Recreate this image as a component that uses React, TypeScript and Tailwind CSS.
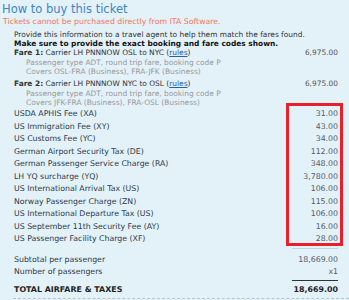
import React from "react";

const fees: [string, string][] = [
  ["USDA APHIS Fee (XA)", "31.00"],
  ["US Immigration Fee (XY)", "43.00"],
  ["US Customs Fee (YC)", "34.00"],
  ["German Airport Security Tax (DE)", "112.00"],
  ["German Passenger Service Charge (RA)", "348.00"],
  ["LH YQ surcharge (YQ)", "3,780.00"],
  ["US International Arrival Tax (US)", "106.00"],
  ["Norway Passenger Charge (ZN)", "115.00"],
  ["US International Departure Tax (US)", "106.00"],
  ["US September 11th Security Fee (AY)", "16.00"],
  ["US Passenger Facility Charge (XF)", "28.00"],
];

function Fare({ n, route, type, covers }: { n: number; route: string; type: string; covers: string }) {
  return (
    <div>
      <div className="flex justify-between h-[9px] leading-[9px] text-[#333]">
        <span>
          <b>Fare {n}:</b> Carrier LH PNNNOW {route} (
          <span className="text-[#2860a8] underline">rules</span>)
        </span>
        <span className="text-[#555]">6,975.00</span>
      </div>
      <div className="pl-3 text-[#999] mt-[0.5px]">
        <div className="h-[9px] leading-[9px] whitespace-nowrap">{type}</div>
        <div className="h-[9px] leading-[9px] whitespace-nowrap">{covers}</div>
      </div>
    </div>
  );
}

export default function App() {
  return (
    <div
      className="relative w-[349px] h-[300px] bg-[#e3f1f9] overflow-hidden"
      style={{ fontFamily: '"DejaVu Sans", Verdana, sans-serif' }}
    >
      <h1 className="pl-[2px] pt-[1px] h-[17px] text-[11.5px] leading-[16px] text-[#3d86c6]">How to buy this ticket</h1>
      <p className="pl-[3px] h-[9px] text-[7.8px] leading-[9px] text-[#f2775a] whitespace-nowrap">
        Tickets cannot be purchased directly from ITA Software.
      </p>

      <div className="pl-[14px] pr-[11px] mt-[3.5px]">
        <div className="text-[7.45px]">
          <div className="h-[9.5px] leading-[9px] text-[#333] whitespace-nowrap">
            Provide this information to a travel agent to help them match the fares found.
          </div>
          <div className="h-[9px] leading-[9px] font-bold text-[#111] whitespace-nowrap">
            Make sure to provide the exact booking and fare codes shown.
          </div>
          <Fare
            n={1}
            route="OSL to NYC"
            type="Passenger type ADT, round trip fare, booking code P"
            covers="Covers OSL-FRA (Business), FRA-JFK (Business)"
          />
          <div className="h-[3.5px]" />
          <Fare
            n={2}
            route="NYC to OSL"
            type="Passenger type ADT, round trip fare, booking code P"
            covers="Covers JFK-FRA (Business), FRA-OSL (Business)"
          />
        </div>

        <div className="mt-[1.75px] text-[7.8px]">
          {fees.map(([label, amount]) => (
            <div key={label} className="flex justify-between h-[12.5px] leading-[12.5px]">
              <span className="text-[#2b3a4a]">{label}</span>
              <span className="text-[#555a66]">{amount}</span>
            </div>
          ))}
          <div className="flex justify-end mt-[2px]">
            <div className="w-[46px] border-t border-[#c8d4dc]" />
          </div>
        </div>

        <div className="mt-[5.5px] text-[7.8px]">
          <div className="flex justify-between h-[12px] leading-[12px]">
            <span className="text-[#2b3a4a]">Subtotal per passenger</span>
            <span className="text-[#555a66]">18,669.00</span>
          </div>
          <div className="flex justify-between h-[12px] leading-[12px]">
            <span className="text-[#2b3a4a]">Number of passengers</span>
            <span className="text-[#555a66]">x1</span>
          </div>
          <div className="flex justify-end mt-[1.5px]">
            <div className="w-[46px] border-t border-[#333]" />
          </div>
          <div className="flex justify-between h-[17px] leading-[17px] text-[7.9px] font-bold text-[#222]">
            <span>TOTAL AIRFARE &amp; TAXES</span>
            <span>18,669.00</span>
          </div>
        </div>
      </div>
      <div className="ml-[13px] border-t border-dashed border-[#b8c4cc]" />

      <div className="absolute left-[286px] top-[103px] w-[57px] h-[143px] border-[3px] border-[#e8202c]" />
    </div>
  );
}
